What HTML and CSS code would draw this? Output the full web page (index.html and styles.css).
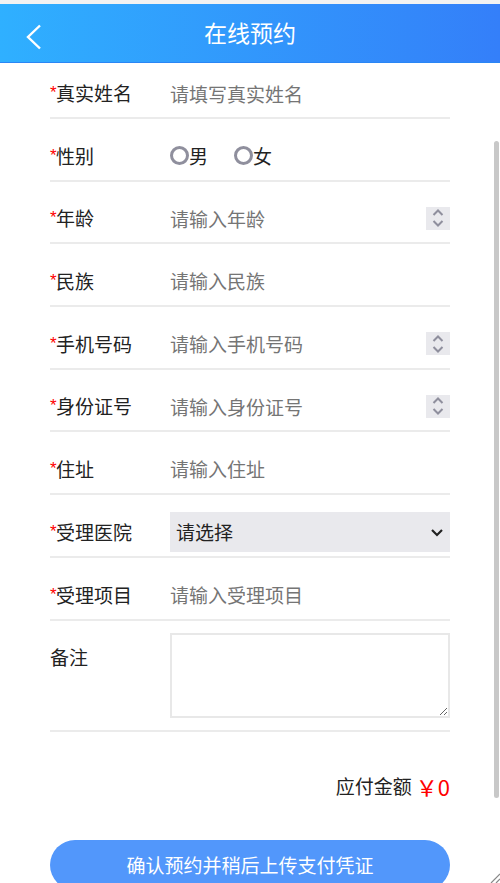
FILE: index.html
```html
<!DOCTYPE html>
<html lang="zh-CN">
<head>
<meta charset="utf-8">
<meta name="viewport" content="width=device-width, initial-scale=1">
<title>在线预约</title>
<link rel="stylesheet" href="styles.css">
</head>
<body>
<header class="bar">
  <a class="back" href="#" aria-label="返回"><svg width="16" height="26" viewBox="0 0 16 26"><path d="M14 1.5 2 13l12 11.5"/></svg></a>
  <h1>在线预约</h1>
</header>
<form class="form">
  <div class="row">
    <label class="name" for="realname"><i>*</i>真实姓名</label>
    <input class="text" id="realname" type="text" placeholder="请填写真实姓名">
  </div>
  <div class="row" role="radiogroup" aria-labelledby="sex">
    <span class="name" id="sex"><i>*</i>性别</span>
    <div class="choices">
      <label><input type="radio" name="sex">男</label>
      <label><input type="radio" name="sex">女</label>
    </div>
  </div>
  <div class="row number">
    <label class="name" for="age"><i>*</i>年龄</label>
    <input class="text" id="age" type="number" placeholder="请输入年龄">
    <span class="spin">
      <button type="button" aria-label="增加"><svg width="12" height="7" viewBox="0 0 12 7"><path d="M1.5 6 6 1.5 10.500 6"/></svg></button>
      <button type="button" aria-label="减少"><svg width="12" height="7" viewBox="0 0 12 7"><path d="M1.500 1 6 5.500 10.500 1"/></svg></button>
    </span>
  </div>
  <div class="row">
    <label class="name" for="nation"><i>*</i>民族</label>
    <input class="text" id="nation" type="text" placeholder="请输入民族">
  </div>
  <div class="row">
    <label class="name" for="phone"><i>*</i>手机号码</label>
    <input class="text" id="phone" type="number" placeholder="请输入手机号码">
    <span class="spin">
      <button type="button" aria-label="增加"><svg width="12" height="7" viewBox="0 0 12 7"><path d="M1.5 6 6 1.5 10.500 6"/></svg></button>
      <button type="button" aria-label="减少"><svg width="12" height="7" viewBox="0 0 12 7"><path d="M1.500 1 6 5.500 10.500 1"/></svg></button>
    </span>
  </div>
  <div class="row number">
    <label class="name" for="idcard"><i>*</i>身份证号</label>
    <input class="text" id="idcard" type="number" placeholder="请输入身份证号">
    <span class="spin">
      <button type="button" aria-label="增加"><svg width="12" height="7" viewBox="0 0 12 7"><path d="M1.5 6 6 1.5 10.500 6"/></svg></button>
      <button type="button" aria-label="减少"><svg width="12" height="7" viewBox="0 0 12 7"><path d="M1.500 1 6 5.500 10.500 1"/></svg></button>
    </span>
  </div>
  <div class="row">
    <label class="name" for="address"><i>*</i>住址</label>
    <input class="text" id="address" type="text" placeholder="请输入住址">
  </div>
  <div class="row">
    <label class="name" for="hospital"><i>*</i>受理医院</label>
    <div class="pick">
      <select id="hospital"><option>请选择</option></select>
      <svg width="14" height="10" viewBox="0 0 14 10"><path d="M2 2l5 5 5-5"/></svg>
    </div>
  </div>
  <div class="row">
    <label class="name" for="project"><i>*</i>受理项目</label>
    <input class="text" id="project" type="text" placeholder="请输入受理项目">
  </div>
  <div class="row note">
    <label class="name" for="remark">备注</label>
    <textarea id="remark"></textarea>
  </div>
  <p class="total">应付金额<strong>￥0</strong></p>
  <button class="submit" type="submit">确认预约并稍后上传支付凭证</button>
</form>
<div class="thumb"></div>
<svg class="grip" width="10" height="10" viewBox="0 0 10 10"><path d="M1 10 10 1M6 10l4-4"/></svg>
</body>
</html>
```
FILE: styles.css
```css
* {
  box-sizing: border-box;
}

body {
  position: relative;
  height: 100vh;
  margin: 0;
  overflow: hidden;
  border-top: 4px solid #f2f2f2;
  background: #fff;
  color: #222;
  font-family: "Noto Sans CJK SC", sans-serif;
  font-size: 19px;
  line-height: 28px;
}

input,
select,
textarea,
button {
  margin: 0;
  padding: 0;
  border: 0;
  background: none;
  color: inherit;
  font: inherit;
}

svg {
  display: block;
  fill: none;
}

.bar {
  display: grid;
  grid-template-columns: 48px 1fr 48px;
  align-items: center;
  height: 59px;
  border-bottom: 1px solid #2a86f5;
  background: linear-gradient(90deg, #2fb0ff, #347ff9);
  color: #fff;
}

.back {
  padding: 8px 0 0 26px;
}

.back path {
  stroke: #fff;
  stroke-width: 2.4;
}

h1 {
  margin: 0;
  padding-bottom: 2px;
  font-size: 23px;
  font-weight: 400;
  line-height: 32px;
  text-align: center;
}

.form {
  padding: 0 50px;
}

.row {
  display: flex;
  align-items: center;
  height: 63px;
  padding-top: 12px;
  border-bottom: 2px solid #ebebeb;
}

.row:first-child {
  height: 56px;
  padding-top: 6px;
}

.number {
  height: 62px;
}

.name {
  display: flex;
  flex: none;
  width: 120px;
}

.name i {
  width: 6px;
  color: #f00;
  font-family: "Liberation Sans", sans-serif;
  font-size: 17px;
  font-style: normal;
}

.text {
  flex: 1;
  min-width: 0;
  height: 40px;
  outline: 0;
  appearance: textfield;
}

.text::placeholder {
  color: #757575;
  opacity: 1;
}

.text::-webkit-inner-spin-button {
  display: none;
}

.spin {
  display: flex;
  flex-direction: column;
  justify-content: center;
  gap: 4px;
  width: 24px;
  height: 23px;
  background: #e9e9ed;
}

.spin button {
  display: flex;
  justify-content: center;
}

.spin path {
  stroke: #8f8f9d;
  stroke-width: 2;
}

.choices {
  display: flex;
  gap: 26px;
}

.choices label {
  display: flex;
  align-items: center;
}

.choices input {
  width: 19px;
  height: 19px;
  border: 3px solid #8f8f9d;
  border-radius: 50%;
  appearance: none;
}

.choices input:checked {
  border-color: #347ff9;
}

.pick {
  position: relative;
  flex: 1;
}

.pick select {
  width: 100%;
  height: 40px;
  padding: 0 6px;
  border-radius: 0;
  background: #e9e9ed;
  appearance: none;
}

.pick svg {
  position: absolute;
  top: 16px;
  right: 6px;
  pointer-events: none;
}

.pick path {
  stroke: #222;
  stroke-width: 2.2;
}

.note {
  align-items: flex-start;
  height: auto;
  padding: 12px 0;
}

.note .name {
  padding-top: 10px;
}

.note textarea {
  flex: 1;
  min-width: 0;
  height: 85px;
  border: 2px solid #e8e8e8;
  resize: both;
}

.total {
  display: flex;
  justify-content: flex-end;
  align-items: center;
  margin: 40px 0;
}

.total strong {
  margin-left: 4px;
  color: #f00;
  font-size: 22px;
  font-weight: 400;
}

.submit {
  width: 100%;
  height: 50px;
  border-radius: 25px;
  background: #5297fb;
  color: #fff;
}

.thumb {
  position: absolute;
  top: 137px;
  right: 1px;
  width: 5px;
  height: 657px;
  border-radius: 3px;
  background: #c8c8c8;
}

.grip {
  position: absolute;
  right: 0;
  bottom: 0;
}

.grip path {
  stroke: #888;
  stroke-width: 1.2;
}
```
